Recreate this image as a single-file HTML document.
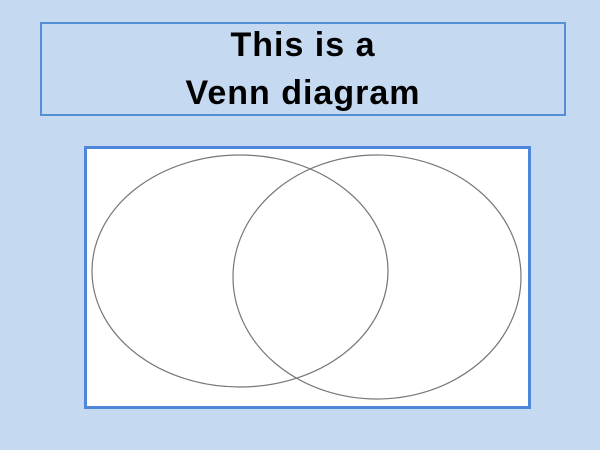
<!DOCTYPE html>
<html><head><style>
body{margin:0;width:600px;height:450px;background:#c5d9f1;position:relative;overflow:hidden}
.t{position:absolute;left:40px;top:22px;width:522px;height:90px;border:2px solid #558ed5;text-align:center;font:bold 34px/48px "Liberation Sans",sans-serif;letter-spacing:1px;color:#000}
.t div{position:relative;top:-3px}
.b{position:absolute;left:84px;top:146px;width:441px;height:257px;border:3px solid #4f86d9;background:#fff}
svg{position:absolute;left:0;top:0}
</style></head><body>
<div class="t"><div>This is a<br>Venn diagram</div></div>
<div class="b"></div>
<svg width="600" height="450"><g fill="none" stroke="#777" stroke-width="1.2">
<ellipse cx="240" cy="271" rx="148" ry="116"/>
<ellipse cx="377" cy="277" rx="144" ry="122"/></g></svg>
</body></html>
